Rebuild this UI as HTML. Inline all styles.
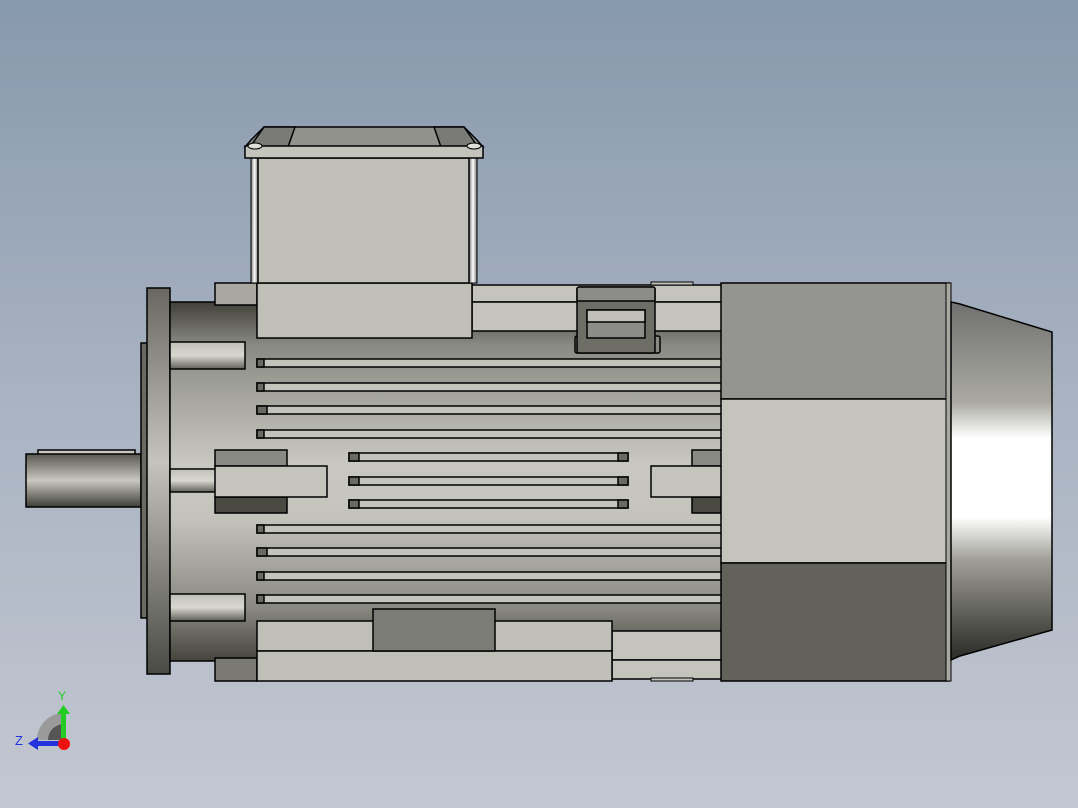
<!DOCTYPE html>
<html><head><style>html,body{margin:0;padding:0;overflow:hidden}body{width:1078px;height:808px;background:linear-gradient(#8799ad,#a9b3c2 50%,#c3c7d1)}svg{display:block}</style></head>
<body>
<svg width="1078" height="808" viewBox="0 0 1078 808" xmlns="http://www.w3.org/2000/svg" stroke="#000" stroke-width="1.5">
<defs>
<linearGradient id="body" x1="0" y1="0" x2="0" y2="1">
<stop offset="0" stop-color="#404038"/><stop offset="0.12" stop-color="#8a8a84"/><stop offset="0.45" stop-color="#c8c8c0"/><stop offset="0.6" stop-color="#c4c4bc"/><stop offset="0.85" stop-color="#8a8a82"/><stop offset="1" stop-color="#45453d"/></linearGradient>
<linearGradient id="flange" x1="0" y1="0" x2="0" y2="1">
<stop offset="0" stop-color="#686860"/><stop offset="0.45" stop-color="#c4c4bc"/><stop offset="1" stop-color="#4a4a44"/></linearGradient>
<linearGradient id="cyl" x1="0" y1="0" x2="0" y2="1">
<stop offset="0" stop-color="#585850"/><stop offset="0.5" stop-color="#c8c8c0"/><stop offset="1" stop-color="#3e3e38"/></linearGradient>
<linearGradient id="boss" x1="0" y1="0" x2="0" y2="1">
<stop offset="0" stop-color="#c0c0b8"/><stop offset="0.5" stop-color="#d8d8d0"/><stop offset="1" stop-color="#606058"/></linearGradient>
<linearGradient id="cap" x1="0" y1="0" x2="0" y2="1">
<stop offset="0" stop-color="#707070"/><stop offset="0.28" stop-color="#aaaaa2"/><stop offset="0.38" stop-color="#ffffff"/><stop offset="0.6" stop-color="#ffffff"/><stop offset="0.72" stop-color="#a0a098"/><stop offset="0.92" stop-color="#4a4a44"/><stop offset="1" stop-color="#2a2a28"/></linearGradient>
<linearGradient id="post" x1="0" y1="0" x2="1" y2="0">
<stop offset="0" stop-color="#777"/><stop offset="0.5" stop-color="#fff"/><stop offset="1" stop-color="#777"/></linearGradient>
</defs>
<rect x="38" y="450" width="97" height="6" fill="#c8c8c0"/>
<rect x="26" y="454" width="115" height="53" fill="url(#cyl)"/>
<rect x="141" y="343" width="7" height="275" fill="#6a6a62"/>
<rect x="147" y="288" width="23" height="386" fill="url(#flange)"/>
<rect x="170" y="302" width="552" height="359" fill="url(#body)"/>
<rect x="170" y="342" width="75" height="27" fill="url(#boss)"/>
<rect x="170" y="594" width="75" height="27" fill="url(#boss)"/>
<rect x="170" y="469" width="46" height="23" fill="url(#boss)"/>
<g fill="#c4c4bc">
<rect x="257" y="359" width="465" height="8"/><rect x="257" y="383" width="465" height="8"/><rect x="257" y="406" width="465" height="8"/><rect x="257" y="430" width="465" height="8"/>
<rect x="257" y="525" width="465" height="8"/><rect x="257" y="548" width="465" height="8"/><rect x="257" y="572" width="465" height="8"/><rect x="257" y="595" width="465" height="8"/>
<rect x="349" y="453" width="279" height="8"/><rect x="349" y="477" width="279" height="8"/><rect x="349" y="500" width="279" height="8"/>
</g>
<g fill="#6a6a62">
<rect x="257" y="359" width="7" height="8"/><rect x="257" y="383" width="7" height="8"/><rect x="257" y="406" width="10" height="8"/><rect x="257" y="430" width="7" height="8"/>
<rect x="257" y="525" width="7" height="8"/><rect x="257" y="548" width="10" height="8"/><rect x="257" y="572" width="7" height="8"/><rect x="257" y="595" width="7" height="8"/>
<rect x="349" y="453" width="10" height="8"/><rect x="349" y="477" width="10" height="8"/><rect x="349" y="500" width="10" height="8"/>
<rect x="618" y="453" width="10" height="8"/><rect x="618" y="477" width="10" height="8"/><rect x="618" y="500" width="10" height="8"/>
</g>
<rect x="215" y="450" width="72" height="16" fill="#8a8a84"/>
<rect x="215" y="497" width="72" height="16" fill="#4a4a42"/>
<rect x="215" y="466" width="112" height="31" fill="#c4c4bc"/>
<rect x="692" y="450" width="30" height="16" fill="#8a8a84"/>
<rect x="692" y="497" width="30" height="16" fill="#4a4a42"/>
<rect x="651" y="466" width="71" height="31" fill="#c4c4bc"/>
<rect x="215" y="283" width="42" height="22" fill="#a8a8a0"/>
<rect x="472" y="285" width="250" height="17" fill="#c4c4bc"/>
<rect x="472" y="302" width="250" height="29" fill="#c4c4bc"/>
<rect x="651" y="282" width="42" height="3" fill="#c4c4bc" stroke-width="1"/>
<rect x="257" y="283" width="215" height="55" fill="#c0c0b8"/>
<rect x="251" y="155" width="7" height="128" fill="url(#post)" stroke-width="1"/>
<rect x="469" y="155" width="8" height="128" fill="url(#post)" stroke-width="1"/>
<rect x="258" y="158" width="211" height="125" fill="#c0c0b8"/>
<polygon points="264,127 464,127 477,140 483,147 245,147 251,140" fill="#92928c"/>
<polygon points="264,127 295,127 288,147 250,147" fill="#7a7a76"/>
<polygon points="434,127 464,127 478,147 441,147" fill="#7a7a76"/>
<rect x="245" y="146" width="238" height="12" fill="#c4c4bc"/>
<ellipse cx="255" cy="146" rx="7" ry="3" fill="#e0e0d8" stroke-width="1"/>
<ellipse cx="474" cy="146" rx="7" ry="3" fill="#e0e0d8" stroke-width="1"/>
<rect x="575" y="336" width="85" height="17" fill="#8a8a84" rx="2"/>
<rect x="577" y="287" width="78" height="66" fill="#6e6e66" rx="2"/>
<rect x="577" y="287" width="78" height="14" fill="#8c8c88" rx="2"/>
<rect x="587" y="310" width="58" height="28" fill="#8c8c88"/>
<rect x="587" y="310" width="58" height="12" fill="#c0c0b8"/>
<rect x="215" y="658" width="42" height="23" fill="#7a7a72"/>
<rect x="612" y="631" width="110" height="29" fill="#c4c4bc"/>
<rect x="612" y="660" width="110" height="19" fill="#c4c4bc"/>
<rect x="651" y="678" width="42" height="3" fill="#c4c4bc" stroke-width="1"/>
<rect x="257" y="621" width="355" height="30" fill="#c0c0b8"/>
<rect x="257" y="651" width="355" height="30" fill="#c0c0b8"/>
<rect x="373" y="609" width="122" height="42" fill="#7c7c76"/>
<rect x="721" y="283" width="228" height="116" fill="#949490"/>
<rect x="721" y="399" width="228" height="164" fill="#c4c4bc"/>
<rect x="721" y="563" width="228" height="118" fill="#62625a"/>
<rect x="946" y="283" width="5" height="398" fill="#a8a8a0" stroke-width="1"/>
<polygon points="951,302 960,304 1052,332 1052,630 960,656 951,660" fill="url(#cap)"/>
<g stroke="none">
<path d="M37,740 A27,27 0 0 1 64,713 L64,740 Z" fill="#9a9a9a"/>
<path d="M48,740 A16,16 0 0 1 64,724 L64,740 Z" fill="#555"/>
<rect x="61" y="712" width="5" height="28" fill="#22cc22"/>
<polygon points="57,714 70,714 63.5,705" fill="#22cc22"/>
<rect x="36" y="741" width="27" height="5" fill="#2233dd"/>
<polygon points="38,737 38,750 28,743.5" fill="#2233dd"/>
<circle cx="64" cy="744" r="6" fill="#ee1111"/>
</g>
<text x="58" y="700" font-family="Liberation Sans,sans-serif" font-size="12" fill="#22cc22" stroke="none">Y</text>
<text x="15" y="745" font-family="Liberation Sans,sans-serif" font-size="13" fill="#2233dd" stroke="none">Z</text>
</svg>
</body></html>
